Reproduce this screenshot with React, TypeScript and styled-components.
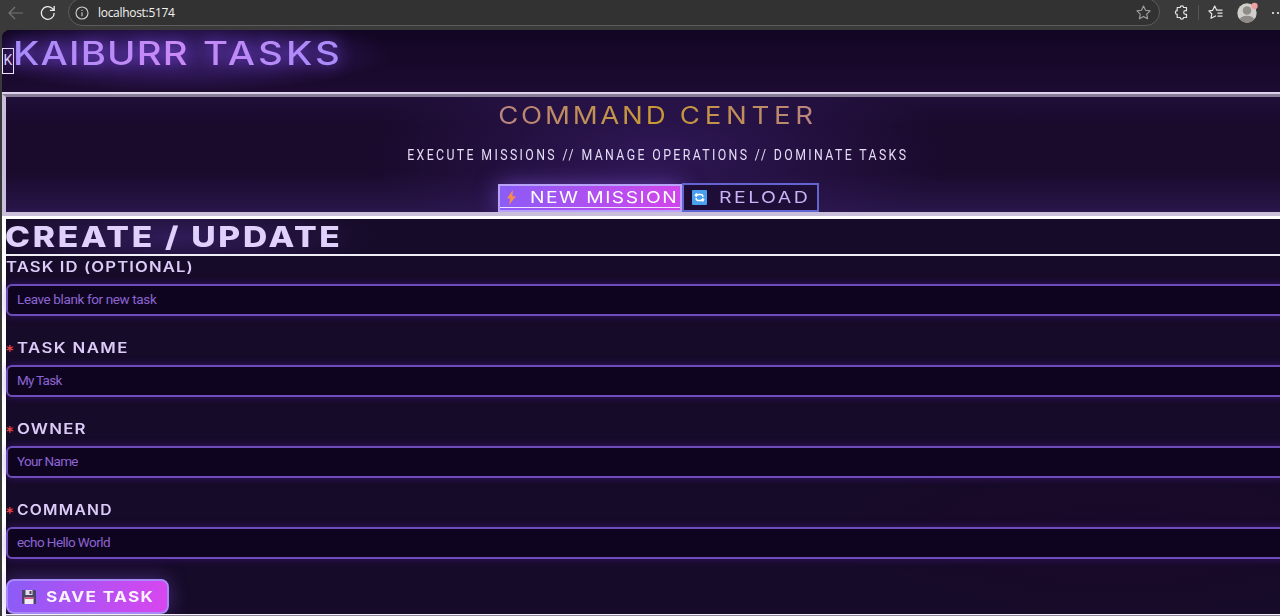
import React from 'react';
import styled, { createGlobalStyle, css } from 'styled-components';

const Global = createGlobalStyle`
  * { box-sizing: border-box; }
  html, body { margin: 0; height: 616px; overflow: hidden; background: #393939; }
  body { font-family: Roboto, "Liberation Sans", sans-serif; color: #e4d6fb; }
`;

const Window = styled.div`
  width: 1280px;
  height: 616px;
  overflow: hidden;
  display: flex;
  flex-direction: column;
`;

/* Browser toolbar */
const Toolbar = styled.header`
  height: 30px;
  flex: none;
  display: flex;
  align-items: flex-start;
  background: #3a3a3a;
  overflow: hidden;
  svg { display: block; flex: none; }
`;
const NavIcons = styled.div`
  width: 68px;
  flex: none;
  height: 25px;
  padding-left: 7px;
  display: flex;
  align-items: center;
  gap: 16px;
`;
const AddressBar = styled.div`
  width: 1092px;
  flex: none;
  height: 28px;
  margin-top: -2px;
  padding: 1px 8px 0 6px;
  border: 1px solid #5d5d5d;
  border-radius: 14px;
  background: #323232;
  display: flex;
  align-items: center;
`;
const Url = styled.span`
  flex: 1;
  margin-left: 9px;
  font: 12px/16px "Open Sans", sans-serif;
  letter-spacing: -0.3px;
  color: #f2f2f2;
`;
const ToolIcons = styled.div`
  height: 25px;
  flex: none;
  padding-left: 14px;
  display: flex;
  align-items: center;
`;
const Divider = styled.i`
  width: 1px;
  height: 15px;
  margin: 0 9px 0 9px;
  background: #555;
`;
const Avatar = styled.div`
  margin: 0 13px 0 13px;
`;

/* Page */
const Page = styled.main`
  flex: 1;
  margin-left: 2px;
  border-top-left-radius: 8px;
  overflow: hidden;
  background: #140a26;
`;

const Display = styled.span<{ $stretch: number; $gap: number; $center?: boolean }>`
  display: inline-block;
  font-family: Inter, "Liberation Sans", sans-serif;
  white-space: nowrap;
  letter-spacing: ${p => p.$gap}px;
  transform: scaleX(${p => p.$stretch});
  transform-origin: ${p => (p.$center ? 'center' : 'left')} center;
`;
const Word = styled.b<{ $gap: number }>`
  font-weight: inherit;
  letter-spacing: ${p => p.$gap}px;
`;

const Brand = styled.div`
  height: 62px;
  display: flex;
  align-items: flex-start;
  background:
    radial-gradient(ellipse 215px 38px at 175px 24px, rgba(84, 48, 158, 0.55), rgba(84, 48, 158, 0.3) 60%, transparent 100%),
    linear-gradient(#120624, #1d0b31);
`;
const LogoBox = styled.div`
  width: 12px;
  height: 26px;
  margin-top: 18px;
  border: 1.5px solid #efe6ff;
  font: 400 14px/23px Roboto, sans-serif;
  text-align: center;
  display: flex;
  justify-content: center;
`;
const BrandTitle = styled.h1`
  margin: 4px 0 0 -1px;
  font-size: 32px;
  line-height: 39px;
  font-weight: 500;
  > span {
    background: linear-gradient(90deg, #a78bfa, #c98af5 50%, #a78bfa);
    -webkit-background-clip: text;
    color: transparent;
    filter: drop-shadow(0 0 7px rgba(130, 80, 246, 0.85));
  }
`;

const Hero = styled.section`
  height: 122px;
  margin: 2px -30px 0 0;
  border-style: solid;
  border-color: #877d97 #c9bfda #c9bfda #c9bfda;
  border-width: 3px 0 4px 4px;
  box-shadow: 0 -2px #ddd3ea;
  display: flex;
  flex-direction: column;
  align-items: center;
  overflow: hidden;
  background:
    radial-gradient(ellipse 290px 100px at 652px 55px, rgba(64, 34, 120, 0.55), transparent 100%),
    linear-gradient(180deg, rgba(52, 30, 100, 0.2), transparent 25%, transparent 65%, rgba(60, 36, 112, 0.45)),
    #1a0a2c;
`;
const HeroTitle = styled.h2`
  margin: 4px 0 0;
  font-size: 24px;
  line-height: 29px;
  font-weight: 400;
  > span {
    background: linear-gradient(90deg, #b98480, #c99a32 50%, #b98480);
    -webkit-background-clip: text;
    color: transparent;
  }
`;
const Tagline = styled.p`
  margin: 14px 0 0;
  font-size: 14px;
  line-height: 20px;
  letter-spacing: 2.7px;
  white-space: nowrap;
  transform: scaleX(0.88);
  color: #e4dcf6;
`;
const Actions = styled.div`
  display: flex;
  align-items: center;
  margin-top: 18px;
`;
const ActionButton = styled.a<{ $primary?: boolean }>`
  height: ${p => (p.$primary ? 28 : 29)}px;
  width: ${p => (p.$primary ? 184 : 137)}px;
  padding: 0 0 1px ${p => (p.$primary ? 6 : 8)}px;
  border: 2px solid #6265cf;
  display: flex;
  align-items: center;
  gap: 12px;
  font-size: 16px;
  font-weight: 400;
  color: #c9b2f6;
  background: #1e0d36;
  ${p =>
    p.$primary &&
    css`
      border-color: #b9a3f8;
      gap: 13px;
      color: #fff;
      background:
        linear-gradient(#efe2ff, #efe2ff) 0 21px / 100% 1px no-repeat,
        linear-gradient(100deg, #8b5cf6, #d145ec);
      box-shadow: 0 0 22px rgba(139, 92, 246, 0.5);
    `}
`;

const FormPanel = styled.section`
  height: 400px;
  margin-right: -4px;
  border-left: 4px solid #fff;
  border-top: 3px solid #fff;
  background:
    radial-gradient(ellipse 300px 90px at 1110px 310px, rgba(34, 4, 42, 0.3), transparent),
    #160b28;
`;
const FormHeading = styled.div`
  height: 37px;
  padding-top: 1px;
  border-bottom: 2px solid #f1edf5;
  background: radial-gradient(ellipse 200px 40px at 170px 18px, rgba(66, 38, 120, 0.6), transparent 100%);
`;
const FormTitle = styled.h2`
  margin: 0 0 0 -1px;
  font-size: 28px;
  line-height: 34px;
  font-weight: 800;
  color: #e0d0fc;
`;
const Field = styled.div`
  height: 81px;
`;
const Label = styled.label`
  height: 28px;
  padding-top: 1px;
  display: flex;
  align-items: flex-start;
  font-size: 14px;
  line-height: 20px;
  font-weight: 600;
  color: #dccbf8;
`;
const Star = styled.span`
  width: 11px;
  font: 700 14px/24px "DejaVu Sans", sans-serif;
  color: #ef4444;
`;
const Input = styled.input<{ $gap: number }>`
  display: block;
  width: 1300px;
  height: 32px;
  padding: 0 9px 2px;
  border: 2px solid #6e4cba;
  border-radius: 6px;
  background: #0f0420;
  box-shadow: 0 0 8px rgba(109, 40, 217, 0.35);
  font: 400 13.5px/20px Roboto, sans-serif;
  letter-spacing: ${p => p.$gap}px;
  color: #e4d6fb;
  outline: 0;
  &::placeholder { color: #8c64d2; opacity: 1; }
`;
const SaveButton = styled.button`
  width: 163px;
  height: 35px;
  margin-top: -1px;
  padding: 0 0 0 14px;
  border: 2px solid #a88af6;
  border-radius: 8px;
  display: flex;
  align-items: center;
  gap: 10px;
  font-size: 15px;
  font-weight: 700;
  color: #fbf2ff;
  background: linear-gradient(100deg, #8b5cf6, #d946ef);
  box-shadow: 0 0 20px rgba(139, 92, 246, 0.4);
`;
const FormEnd = styled.div`
  height: 2px;
  background: linear-gradient(#f4f1f7 50%, #8d8599 50%);
`;

const BackIcon = () => (
  <svg width="17" height="14" viewBox="0 0 17 14" fill="none" stroke="#757575" strokeWidth="1.2">
    <path d="M16 7H2M8 1L2 7l6 6" />
  </svg>
);
const ReloadIcon = () => (
  <svg width="16" height="16" viewBox="0 0 16 16" fill="none" stroke="#ececec" strokeWidth="1.3">
    <path d="M14.2 8A6.4 6.4 0 1 1 12.3 3.4L14 5.1M14.2 1v4.3H9.9" />
  </svg>
);
const InfoIcon = () => (
  <svg width="14" height="14" viewBox="0 0 14 14" fill="none" stroke="#cfcfcf" strokeWidth="1.1">
    <circle cx="7" cy="7" r="6" />
    <path d="M7 6.3v4M7 3.7v1.3" />
  </svg>
);
const StarIcon = () => (
  <svg width="15" height="15" viewBox="0 0 15 15" fill="none" stroke="#a0a0a0" strokeWidth="1.1" strokeLinejoin="round">
    <path d="M7.5 1l2 4.3 4.6.6-3.4 3.2.9 4.6-4.1-2.3-4.1 2.3.9-4.6L.9 5.9l4.6-.6z" />
  </svg>
);
const PuzzleIcon = () => (
  <svg width="15" height="15" viewBox="0 0 15 15" fill="none" stroke="#e5e5e5" strokeWidth="1.2" strokeLinejoin="round">
    <path d="M4 2.5h2.2a1.7 1.7 0 0 1 3.4 0H12.5v3.2h-1a1.8 1.8 0 0 0 0 3.6h1v3.2H9.6a1.7 1.7 0 0 1-3.4 0H3.200V9.300a1.800 1.800 0 0 1 0-3.600V2.500z" />
  </svg>
);
const FavoritesIcon = () => (
  <svg width="16" height="15" viewBox="0 0 16 15" fill="none" stroke="#e5e5e5" strokeWidth="1.2" strokeLinejoin="round">
    <path d="M8 10.8L3 13.3l.8-4.3L.9 5.900l3.800-.6L6.700 1l2 4.200h5.800M9.500 8.200h5M9.500 11.200h5" />
  </svg>
);
const AvatarIcon = () => (
  <svg width="21" height="21" viewBox="0 0 21 21">
    <defs>
      <clipPath id="face"><circle cx="10" cy="11" r="9.7" /></clipPath>
    </defs>
    <g clipPath="url(#face)">
      <rect width="21" height="21" fill="#d0cecb" />
      <circle cx="10" cy="8.5" r="4.3" fill="#8f8b88" />
      <ellipse cx="10" cy="18.5" rx="7.5" ry="4.8" fill="#8f8b88" />
    </g>
    <circle cx="17.5" cy="4" r="3.2" fill="#f0a0a0" />
  </svg>
);
const DotsIcon = () => (
  <svg width="14" height="4" viewBox="0 0 14 4" fill="#eee">
    <circle cx="2" cy="2" r="1.1" /><circle cx="7" cy="2" r="1.1" /><circle cx="12" cy="2" r="1.1" />
  </svg>
);
const BoltIcon = () => (
  <svg width="11" height="15" viewBox="0 0 11 15">
    <path d="M6.8 0L1 8.5h3.200L3 15l7-8.800H6.500z" fill="#f58b4c" />
  </svg>
);
const SyncIcon = () => (
  <svg width="15" height="15" viewBox="0 0 15 15">
    <rect width="15" height="15" rx="1" fill="#4a9fee" />
    <path d="M4.2 7V4.5h4.6a2 2 0 0 1 2 2V7M10.8 8v2.5H6.200a2 2 0 0 1-2-2V8" fill="none" stroke="#fff" strokeWidth="1.5" />
    <path d="M2.200 5.800L4.200 3l2.300 2.800zM12.800 9.200L10.800 12 8.500 9.200z" fill="#fff" />
  </svg>
);
const DiskIcon = () => (
  <svg width="14" height="14" viewBox="0 0 14 14">
    <path d="M0 0h13l1 1v13H1l-1-1z" fill="#4a4566" />
    <rect x="3.5" width="7" height="5" fill="#e4dcea" />
    <rect x="7.5" y="1" width="2" height="3" fill="#4a4566" />
    <rect x="2.5" y="7.5" width="9" height="6.5" fill="#f3ecf6" />
    <rect x="2.5" y="7.5" width="9" height="1.5" fill="#e0487c" />
  </svg>
);

const fields = [
  { label: 'TASK ID (OPTIONAL)', hint: 'Leave blank for new task', required: false, stretch: 1.19, gap: 0.94, hintGap: -0.38 },
  { label: 'TASK NAME', hint: 'My Task', required: true, stretch: 1.2, gap: 1.15, hintGap: -0.75 },
  { label: 'OWNER', hint: 'Your Name', required: true, stretch: 1.2, gap: 1, hintGap: -0.65 },
  { label: 'COMMAND', hint: 'echo Hello World', required: true, stretch: 1.12, gap: 1.1, hintGap: -0.57 },
];

export default function App() {
  return (
    <Window>
      <Global />
      <Toolbar>
        <NavIcons><BackIcon /><ReloadIcon /></NavIcons>
        <AddressBar><InfoIcon /><Url>localhost:5174</Url><StarIcon /></AddressBar>
        <ToolIcons>
          <PuzzleIcon /><Divider /><FavoritesIcon />
          <Avatar><AvatarIcon /></Avatar>
          <DotsIcon />
        </ToolIcons>
      </Toolbar>
      <Page>
        <Brand>
          <LogoBox>K</LogoBox>
          <BrandTitle>
            <Display $stretch={1.2} $gap={3.2}>
              <Word $gap={1}>KAIBURR</Word> <Word $gap={2.6}>TASKS</Word>
            </Display>
          </BrandTitle>
        </Brand>
        <Hero>
          <HeroTitle>
            <Display $center $stretch={1.15} $gap={3.2}>
              <Word $gap={2.4}>COMMAND</Word> <Word $gap={4.1}>CENTER</Word>
            </Display>
          </HeroTitle>
          <Tagline>EXECUTE MISSIONS // MANAGE OPERATIONS // DOMINATE TASKS</Tagline>
          <Actions>
            <ActionButton $primary><BoltIcon /><Display $stretch={1.2} $gap={1.25}>NEW MISSION</Display></ActionButton>
            <ActionButton><SyncIcon /><Display $stretch={1.22} $gap={2}>RELOAD</Display></ActionButton>
          </Actions>
        </Hero>
        <FormPanel>
          <FormHeading>
            <FormTitle><Display $stretch={1.2} $gap={2.25}>CREATE / UPDATE</Display></FormTitle>
          </FormHeading>
          {fields.map(f => (
            <Field key={f.label}>
              <Label>
                {f.required && <Star>*</Star>}
                <Display $stretch={f.stretch} $gap={f.gap}>{f.label}</Display>
              </Label>
              <Input placeholder={f.hint} $gap={f.hintGap} />
            </Field>
          ))}
          <SaveButton><DiskIcon /><Display $stretch={1.15} $gap={1.16}>SAVE TASK</Display></SaveButton>
          <FormEnd />
        </FormPanel>
      </Page>
    </Window>
  );
}
